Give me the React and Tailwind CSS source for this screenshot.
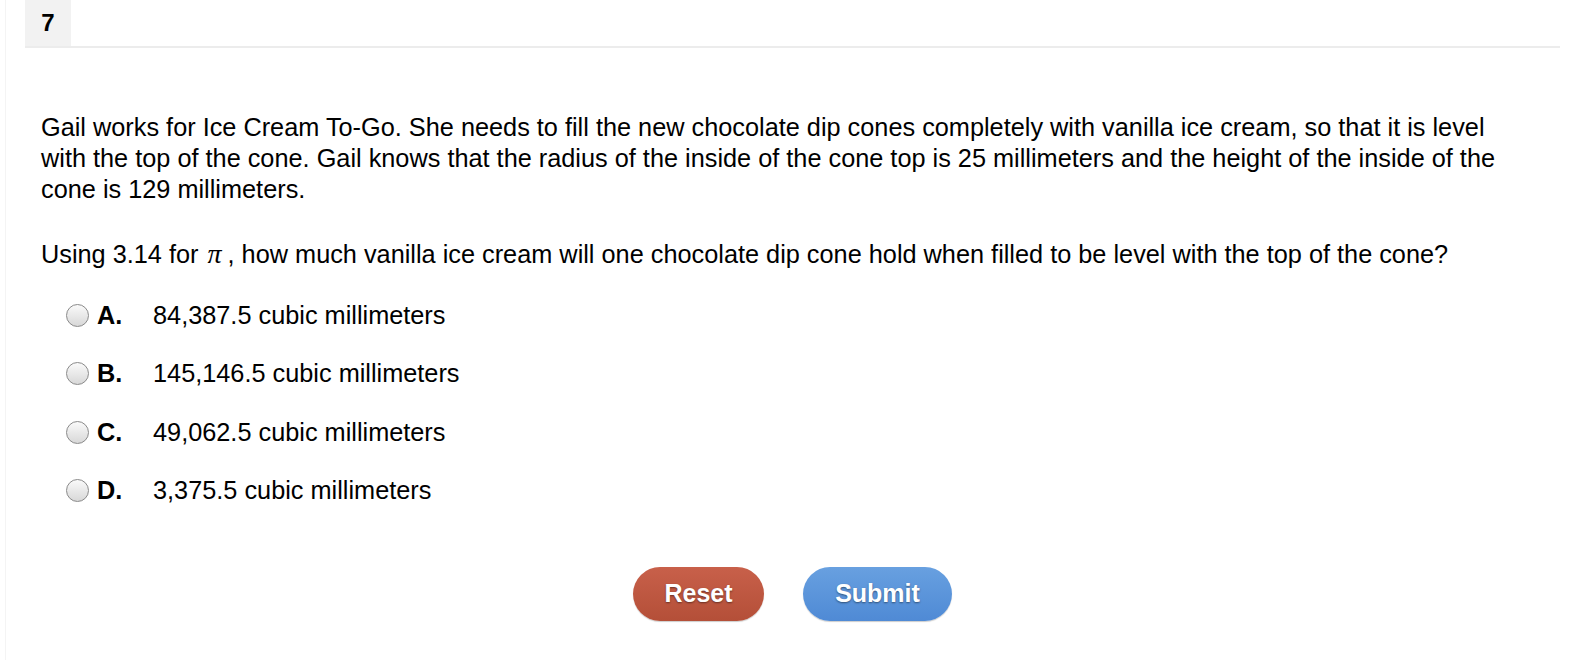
import React, { useState } from 'react';

const choices = [
  { key: 'A', text: '84,387.5 cubic millimeters' },
  { key: 'B', text: '145,146.5 cubic millimeters' },
  { key: 'C', text: '49,062.5 cubic millimeters' },
  { key: 'D', text: '3,375.5 cubic millimeters' },
];

const App = () => {
  const [picked, setPicked] = useState(null);

  return (
    <div className="min-h-[660px] bg-white text-black font-['Liberation_Sans',Arial,sans-serif]">
      <div className="ml-[5px] min-h-[660px] border-l border-[#f4f4f4] pl-[19px] pr-[19px]">
        {/* question number header */}
        <div className="flex h-[48px] border-b-2 border-[#ececec]">
          <div className="w-[46px] h-[46px] bg-[#f2f2f2] flex items-center justify-center text-[24px] font-bold">
            7
          </div>
        </div>

        <div className="pl-[16px] pt-[64px] text-[25.3px] leading-[31px]">
          <p className="pr-[55px]">
            Gail works for Ice Cream To-Go. She needs to fill the new chocolate dip cones completely with vanilla ice cream, so that it is level with the top of the cone. Gail knows that the radius of the inside of the cone top is 25 millimeters and the height of the inside of the cone is 129 millimeters.
          </p>
          <p className="mt-[33px]">
            Using 3.14 for{' '}
            <span className="font-['Liberation_Serif',serif] italic text-[28px] pl-[2px] pr-[6px]">π</span>
            , how much vanilla ice cream will one chocolate dip cone hold when filled to be level with the top of the cone?
          </p>

          <div className="mt-[30px] flex flex-col gap-[27.4px] pl-[25px]">
            {choices.map((c) => (
              <label key={c.key} className="flex items-center h-[31px] cursor-pointer" onClick={() => setPicked(c.key)}>
                <span className="w-[23px] h-[23px] rounded-full border border-[#8a8a8a] bg-gradient-to-b from-[#fafafa] to-[#d8d8d8] flex items-center justify-center">
                  {picked === c.key && <span className="w-[9px] h-[9px] rounded-full bg-[#333]" />}
                </span>
                <span className="ml-[8px] w-[56px] font-bold">{c.key}.</span>
                <span>{c.text}</span>
              </label>
            ))}
          </div>
        </div>

        <div className="mt-[61px] flex justify-center gap-[39px]">
          <button
            onClick={() => setPicked(null)}
            className="w-[131px] h-[54px] rounded-full bg-gradient-to-b from-[#c8604a] to-[#b44f38] text-white text-[25px] font-bold [text-shadow:0_1px_2px_rgba(0,0,0,0.45)] shadow-[0_1px_1px_rgba(0,0,0,0.2)]"
          >
            Reset
          </button>
          <button className="w-[149px] h-[54px] rounded-full bg-gradient-to-b from-[#68a0e0] to-[#4f8ad5] text-white text-[25px] font-bold [text-shadow:0_1px_2px_rgba(0,0,0,0.45)] shadow-[0_1px_1px_rgba(0,0,0,0.2)]">
            Submit
          </button>
        </div>
      </div>
    </div>
  );
};

export default App;
